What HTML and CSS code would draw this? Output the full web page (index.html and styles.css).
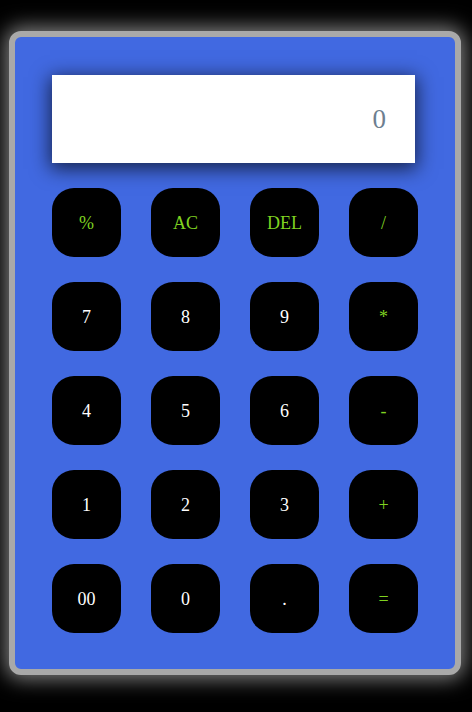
FILE: index.html
```html
<!DOCTYPE html>
<html>
<head>
<meta charset="utf-8">
<link rel="stylesheet" href="styles.css">
</head>
<body>
<div class="calc">
  <div class="display"><span class="value">0</span></div>
  <div class="keys">
    <button class="key op">%</button>
    <button class="key op">AC</button>
    <button class="key op">DEL</button>
    <button class="key op">/</button>
    <button class="key">7</button>
    <button class="key">8</button>
    <button class="key">9</button>
    <button class="key op">*</button>
    <button class="key">4</button>
    <button class="key">5</button>
    <button class="key">6</button>
    <button class="key op">-</button>
    <button class="key">1</button>
    <button class="key">2</button>
    <button class="key">3</button>
    <button class="key op">+</button>
    <button class="key">00</button>
    <button class="key">0</button>
    <button class="key">.</button>
    <button class="key op">=</button>
  </div>
</div>
</body>
</html>
```
FILE: styles.css
```css
html, body {
  margin: 0;
  background: #000;
}
body {
  min-height: 100vh;
  box-sizing: border-box;
  padding: 31px 0 37px 9px;
  font-family: "Liberation Serif", "Times New Roman", serif;
}
.calc {
  box-sizing: border-box;
  width: 452px;
  border: 6px solid #a9a9a9;
  border-radius: 12px;
  background: #4169e1;
  padding: 38px 0 36px 37px;
  box-shadow: 0 0 20px 4px rgba(255, 255, 255, 0.5);
}
.display {
  width: 363px;
  height: 88px;
  background: #fff;
  box-shadow: 0 4px 18px 2px rgba(0, 0, 0, 0.65);
  display: flex;
  align-items: center;
  justify-content: flex-end;
  padding-right: 29px;
  box-sizing: border-box;
}
.value {
  font-size: 27px;
  color: #6e7f90;
}
.keys {
  margin-top: 25px;
  display: grid;
  grid-template-columns: repeat(4, 69px);
  grid-auto-rows: 69px;
  column-gap: 30px;
  row-gap: 25px;
}
.key {
  border: none;
  background: #000;
  border-radius: 22px;
  color: #fff;
  font-family: "Liberation Serif", "Times New Roman", serif;
  font-size: 18px;
  padding: 2px 0 0;
  display: flex;
  align-items: center;
  justify-content: center;
}
.key.op {
  color: #7fd320;
}
```
